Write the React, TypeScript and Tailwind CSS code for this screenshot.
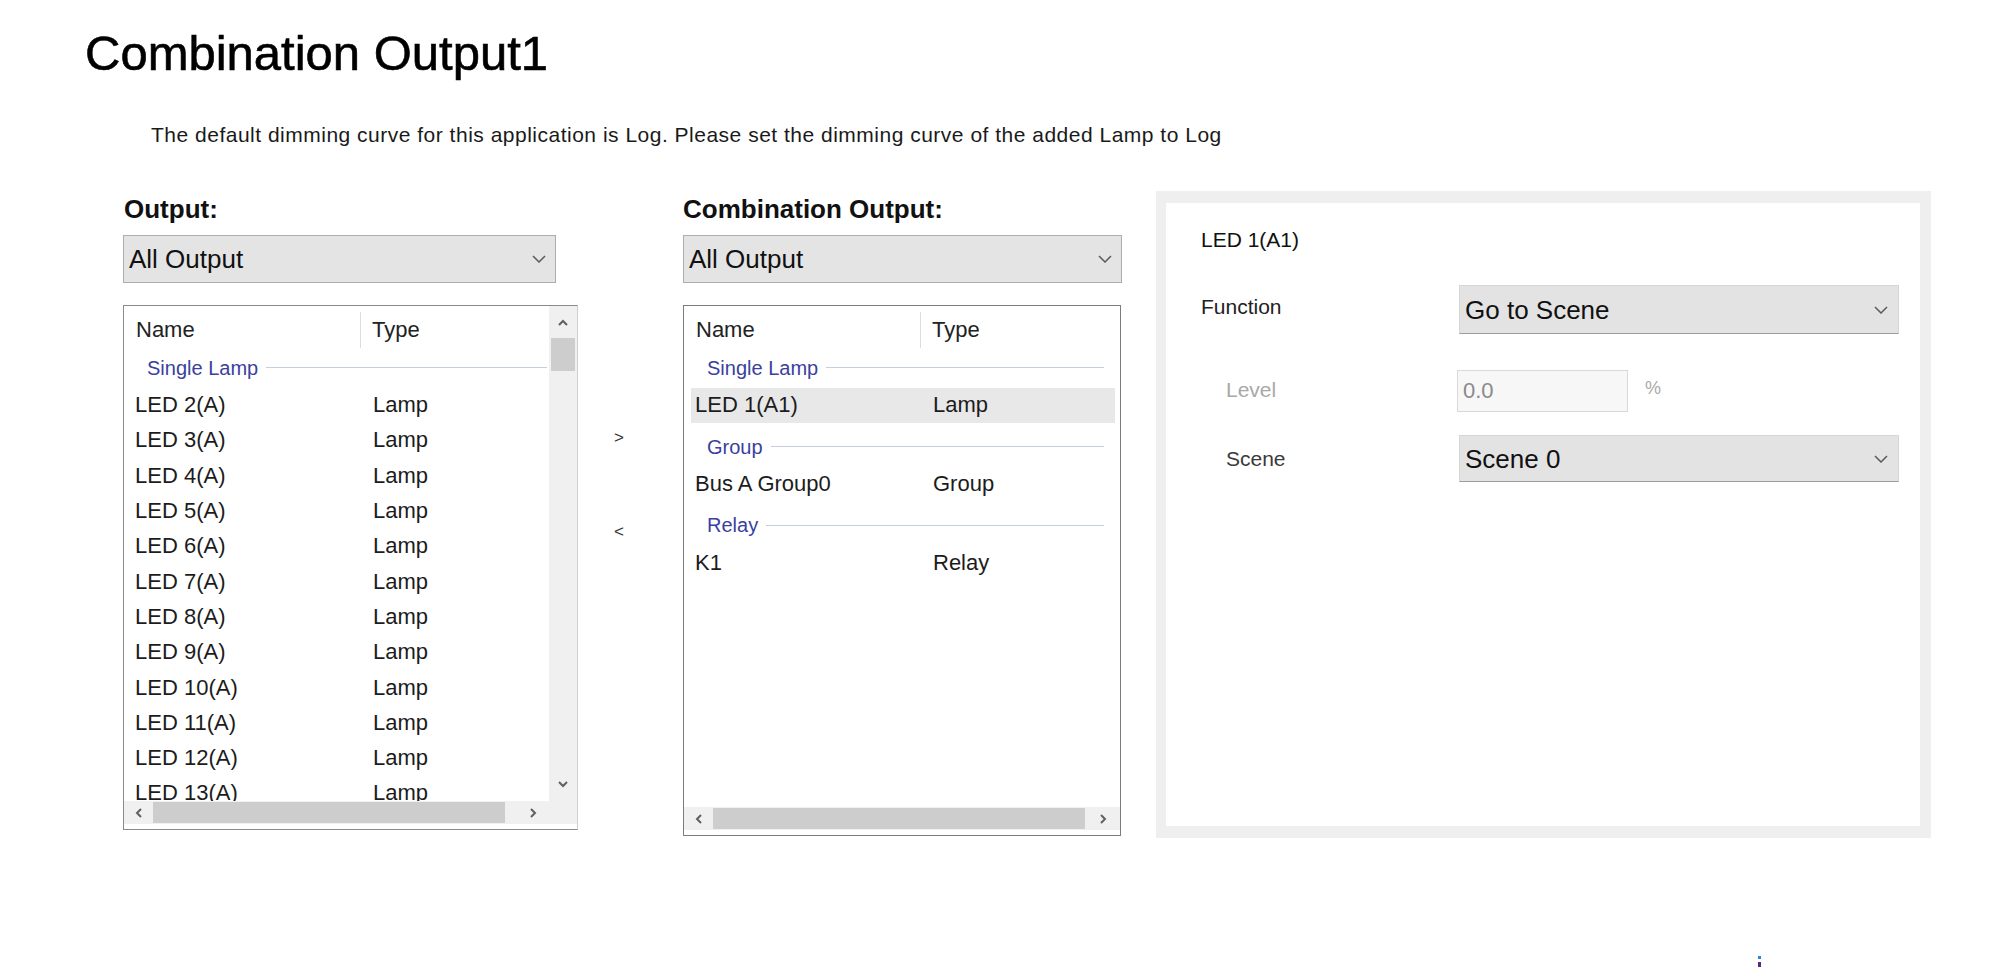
import React from "react";

const DropChevron = () => (
  <svg width="14" height="8" viewBox="0 0 14 8" className="shrink-0">
    <polyline points="1,1 7,7 13,1" fill="none" stroke="#5a5a5a" strokeWidth="1.5" />
  </svg>
);

const ArrowUp = () => (
  <svg width="10" height="7" viewBox="0 0 10 7">
    <polyline points="1,6 5,2 9,6" fill="none" stroke="#606060" strokeWidth="2" />
  </svg>
);
const ArrowDown = () => (
  <svg width="10" height="7" viewBox="0 0 10 7">
    <polyline points="1,1 5,5 9,1" fill="none" stroke="#606060" strokeWidth="2" />
  </svg>
);
const ArrowLeft = () => (
  <svg width="7" height="10" viewBox="0 0 7 10">
    <polyline points="6,1 2,5 6,9" fill="none" stroke="#606060" strokeWidth="2" />
  </svg>
);
const ArrowRight = () => (
  <svg width="7" height="10" viewBox="0 0 7 10">
    <polyline points="1,1 5,5 1,9" fill="none" stroke="#606060" strokeWidth="2" />
  </svg>
);

type Row =
  | { kind: "group"; label: string }
  | { kind: "item"; name: string; type: string; selected?: boolean };

function Dropdown({ label, w }: { label: string; w: string }) {
  return (
    <div className={`${w} h-[48px] bg-[#e4e4e4] border border-[#adadad] flex items-center justify-between pl-[5px] pr-[9px]`}>
      <span className="text-[26px] leading-[26px] text-[#111]">{label}</span>
      <DropChevron />
    </div>
  );
}

function HeaderRow() {
  return (
    <div className="h-[38px] flex items-start shrink-0 text-[22px] leading-[22px] text-[#222]">
      <div className="w-[237px] h-[36px] mt-[6px] border-r border-[#dcdcdc] flex items-center pl-[12px]">Name</div>
      <div className="h-[36px] mt-[6px] flex items-center pl-[11px]">Type</div>
    </div>
  );
}

function GroupRow({ label, wideInset }: { label: string; wideInset: boolean }) {
  return (
    <div className="h-[43.5px] shrink-0 flex items-center pt-[4px] pl-[23px]">
      <span className="text-[20px] leading-[20px] text-[#3b3f9f] whitespace-nowrap">{label}</span>
      <div className={`flex-1 h-px bg-[#c5cde0] ml-[8px] ${wideInset ? "mr-[16px]" : "mr-[2px]"}`} />
    </div>
  );
}

function ItemRow({ name, type, selected }: { name: string; type: string; selected?: boolean }) {
  return (
    <div
      className={`h-[35.3px] shrink-0 flex items-center ml-[7px] mr-[5px] text-[22px] leading-[22px] text-[#1c1c1c] ${
        selected ? "bg-[#e8e8e8]" : ""
      }`}
    >
      <span className="w-[242px] pl-[4px] whitespace-nowrap">{name}</span>
      <span className="whitespace-nowrap">{type}</span>
    </div>
  );
}

function ListContent({ rows, wideInset }: { rows: Row[]; wideInset: boolean }) {
  return (
    <div className="flex-1 min-w-0 overflow-hidden flex flex-col">
      <HeaderRow />
      {rows.map((r, i) =>
        r.kind === "group" ? (
          <GroupRow key={i} label={r.label} wideInset={wideInset} />
        ) : (
          <ItemRow key={i} name={r.name} type={r.type} selected={r.selected} />
        )
      )}
    </div>
  );
}

const leftRows: Row[] = [
  { kind: "group", label: "Single Lamp" },
  ...[2, 3, 4, 5, 6, 7, 8, 9, 10, 11, 12, 13].map(
    (n): Row => ({ kind: "item", name: `LED ${n}(A)`, type: "Lamp" })
  ),
];

const rightRows: Row[] = [
  { kind: "group", label: "Single Lamp" },
  { kind: "item", name: "LED 1(A1)", type: "Lamp", selected: true },
  { kind: "group", label: "Group" },
  { kind: "item", name: "Bus A Group0", type: "Group" },
  { kind: "group", label: "Relay" },
  { kind: "item", name: "K1", type: "Relay" },
];

function LeftList() {
  return (
    <div className="w-[455px] h-[525px] border border-[#8a8a8a] border-r-[#cfcfcf] flex flex-col bg-white">
      <div className="flex-1 min-h-0 flex">
        <ListContent rows={leftRows} wideInset={false} />
        <div className="w-[28px] bg-[#f0f0f0] flex flex-col">
          <div className="h-[32px] flex items-center justify-center">
            <ArrowUp />
          </div>
          <div className="h-[33px] mx-[2px] bg-[#cdcdcd]" />
          <div className="flex-1" />
          <div className="h-[34px] flex items-center justify-center">
            <ArrowDown />
          </div>
        </div>
      </div>
      <div className="h-[23px] flex">
        <div className="flex-1 bg-[#f0f0f0] flex items-center">
          <div className="w-[28px] h-full flex items-center justify-center">
            <ArrowLeft />
          </div>
          <div className="w-[352px] h-[21px] ml-[1px] bg-[#cdcdcd]" />
          <div className="flex-1" />
          <div className="w-[28px] h-full mr-[2px] flex items-center justify-center">
            <ArrowRight />
          </div>
        </div>
        <div className="w-[28px] bg-[#f0f0f0]" />
      </div>
      <div className="h-[5px] bg-white" />
    </div>
  );
}

function RightList() {
  return (
    <div className="w-[438px] h-[531px] border border-[#7c7c7c] flex flex-col bg-white">
      <div className="flex-1 min-h-0 flex">
        <ListContent rows={rightRows} wideInset={true} />
      </div>
      <div className="h-[23px] bg-[#f0f0f0] flex items-center">
        <div className="w-[28px] h-full flex items-center justify-center">
          <ArrowLeft />
        </div>
        <div className="w-[372px] h-[21px] ml-[1px] bg-[#cdcdcd]" />
        <div className="flex-1" />
        <div className="w-[28px] h-full mr-[3px] flex items-center justify-center">
          <ArrowRight />
        </div>
      </div>
      <div className="h-[5px] bg-white" />
    </div>
  );
}

function PanelSelect({ label, h }: { label: string; h: string }) {
  return (
    <div className={`w-[440px] ${h} bg-[#e3e3e3] border border-[#d6d6d6] border-b-[#9c9c9c] flex items-center justify-between pl-[5px] pr-[10px]`}>
      <span className="text-[26px] leading-[26px] text-[#111]">{label}</span>
      <DropChevron />
    </div>
  );
}

export default function App() {
  return (
    <div className="w-[2013px] h-[976px] bg-white relative overflow-hidden font-['Liberation_Sans',Arial,sans-serif]">
      <div className="pt-[29px] pl-[85px]">
        <h1 className="text-[49px] leading-[48px] text-black font-normal [-webkit-text-stroke:0.6px_#000]">
          Combination Output1
        </h1>
      </div>
      <p className="mt-[47px] pl-[151px] text-[21px] leading-[21px] tracking-[0.5px] text-[#1a1a1a]">
        The default dimming curve for this application is Log. Please set the dimming curve of the added Lamp to Log
      </p>

      <div className="mt-[46px] pl-[123px] flex items-start">
        {/* Left column */}
        <div className="w-[455px] pt-[5px] flex flex-col">
          <div className="h-[26px] text-[26px] leading-[26px] font-bold text-[#111] pl-[1px]">Output:</div>
          <div className="mt-[13px]">
            <Dropdown label="All Output" w="w-[433px]" />
          </div>
          <div className="mt-[22px]">
            <LeftList />
          </div>
        </div>

        {/* Middle transfer buttons */}
        <div className="w-[105px] pt-[238px] pl-[36px] flex flex-col text-[17px] leading-[18px] text-[#333]">
          <span className="h-[18px]">&gt;</span>
          <span className="h-[18px] mt-[76px]">&lt;</span>
        </div>

        {/* Right column */}
        <div className="w-[438px] pt-[5px] flex flex-col">
          <div className="h-[26px] text-[26px] leading-[26px] font-bold text-[#111] whitespace-nowrap">Combination Output:</div>
          <div className="mt-[13px]">
            <Dropdown label="All Output" w="w-[439px]" />
          </div>
          <div className="mt-[22px]">
            <RightList />
          </div>
        </div>

        {/* Property panel */}
        <div className="ml-[35px] w-[775px] h-[647px] bg-[#efefef] pt-[12px] pb-[12px] pl-[10px] pr-[11px]">
          <div className="w-full h-full bg-white pl-[35px] flex flex-col">
            <div className="mt-[26px] text-[21px] leading-[21px] text-[#111]">LED 1(A1)</div>

            <div className="mt-[35px] flex items-center h-[49px]">
              <div className="w-[258px] pb-[7px] text-[21px] leading-[21px] text-[#222]">Function</div>
              <PanelSelect label="Go to Scene" h="h-[49px]" />
            </div>

            <div className="mt-[36px] flex items-center h-[42px]">
              <div className="w-[256px] pl-[25px] pb-[4px] text-[21px] leading-[21px] text-[#a8a8a8]">Level</div>
              <div className="w-[171px] h-[42px] bg-[#f7f7f7] border border-[#d9d9d9] flex items-center pl-[5px] text-[22px] leading-[22px] text-[#8a8a8a]">
                0.0
              </div>
              <span className="ml-[17px] pb-[6px] text-[18px] leading-[18px] text-[#aaaaaa]">%</span>
            </div>

            <div className="mt-[23px] flex items-center h-[47px]">
              <div className="w-[258px] pl-[25px] text-[21px] leading-[21px] text-[#3a3a3a]">Scene</div>
              <PanelSelect label="Scene 0" h="h-[47px]" />
            </div>
          </div>
        </div>
      </div>

      {/* tiny cursor artifact */}
      <div className="absolute left-[1758px] top-[956px] w-[3px] h-[3px] bg-[#2f86d6]" />
      <div className="absolute left-[1758px] top-[962px] w-[3px] h-[5px] bg-[#5a2a80]" />
    </div>
  );
}
